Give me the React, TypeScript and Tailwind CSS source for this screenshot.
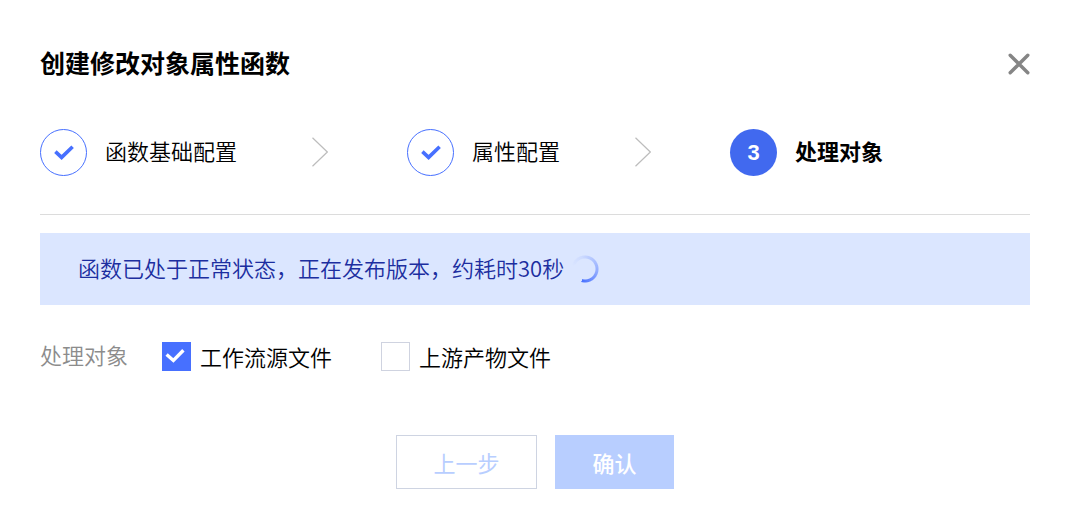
import { FormEvent, useState } from "react";

type Step = {
  title: string;
  status: "done" | "active";
};

const steps: Step[] = [
  { title: "函数基础配置", status: "done" },
  { title: "属性配置", status: "done" },
  { title: "处理对象", status: "active" },
];

const targetOptions = ["工作流源文件", "上游产物文件"];

function StepArrow() {
  return (
    <svg
      viewBox="0 0 16 30"
      fill="none"
      stroke="#bdbdbd"
      strokeWidth="1.2"
      className="mr-[79px] mb-px ml-[75px] h-[30px] w-4 shrink-0"
      aria-hidden="true"
    >
      <path d="M0.5 0.8L15.3 15L0.5 29.2" />
    </svg>
  );
}

function StepBadge({ step, index }: { step: Step; index: number }) {
  if (step.status === "active") {
    return (
      <span className="flex size-[47px] shrink-0 items-center justify-center rounded-full bg-[#4169ef] font-['Liberation_Sans',sans-serif] text-[22px] font-bold text-white">
        {index + 1}
      </span>
    );
  }

  return (
    <span className="flex size-[47px] shrink-0 items-center justify-center rounded-full border border-[#4770ff]">
      <svg
        viewBox="0 0 20 16"
        fill="none"
        stroke="#4770ff"
        strokeWidth="3.6"
        className="h-4 w-5"
        aria-hidden="true"
      >
        <path d="M1.4 6.6L7.6 12.4L18.6 1.8" />
      </svg>
    </span>
  );
}

function Spinner() {
  return (
    <span
      role="status"
      aria-label="发布中"
      className="size-[30px] shrink-0 rounded-full bg-[conic-gradient(from_285deg,#4770ff00_0deg,#4770ff18_60deg,#4770ff80_180deg,#4770ff_270deg,transparent_272deg)] [mask:radial-gradient(circle,transparent_10px,black_11px,black_13px,transparent_14px)]"
    />
  );
}

export default function App() {
  const [selected, setSelected] = useState<string[]>(["工作流源文件"]);

  function toggleOption(option: string) {
    setSelected((current) =>
      current.includes(option)
        ? current.filter((item) => item !== option)
        : [...current, option]
    );
  }

  function handleSubmit(event: FormEvent<HTMLFormElement>) {
    event.preventDefault();
  }

  return (
    <main
      lang="zh-CN"
      className="bg-white pt-11 pr-[39px] pb-8 pl-10 font-['Noto_Sans_CJK_SC',sans-serif] text-[22px] leading-8 font-[350] text-black"
    >
      <header className="flex h-10 items-center justify-between">
        <h1 className="pb-1 text-[25px] font-bold">创建修改对象属性函数</h1>

        <button type="button" aria-label="关闭" className="p-0">
          <svg
            viewBox="0 0 22 22"
            fill="none"
            stroke="#858585"
            strokeWidth="3.4"
            strokeLinecap="round"
            className="size-[22px]"
            aria-hidden="true"
          >
            <path d="M2.2 2.2L19.8 19.8M19.8 2.2L2.2 19.8" />
          </svg>
        </button>
      </header>

      <ol className="mt-[45px] flex items-center border-b border-[#dcdcdc] pb-[38px]">
        {steps.map((step, index) => (
          <li key={step.title} className="flex items-center">
            {index > 0 && <StepArrow />}
            <StepBadge step={step} index={index} />
            <span
              className={
                step.status === "active"
                  ? "ml-[18px] pb-1.5 font-bold whitespace-nowrap"
                  : "ml-[18px] pb-1.5 whitespace-nowrap"
              }
            >
              {step.title}
            </span>
          </li>
        ))}
      </ol>

      <div className="mt-[18px] flex min-h-[72px] items-center gap-1.5 bg-[#dbe6ff] px-[38px] text-[#1c2ea0]">
        <p className="pb-1">函数已处于正常状态，正在发布版本，约耗时30秒</p>
        <Spinner />
      </div>

      <form onSubmit={handleSubmit}>
        <fieldset className="mt-[33px] flex items-center">
          <legend className="float-left mr-[34px] pb-1 text-[#8c8c8c]">处理对象</legend>

          <div className="flex flex-wrap gap-x-[49px]">
            {targetOptions.map((option) => (
              <label key={option} className="flex items-center gap-[9px]">
                <span className="relative flex size-[29px] shrink-0">
                  <input
                    type="checkbox"
                    checked={selected.includes(option)}
                    onChange={() => toggleOption(option)}
                    className="peer size-full appearance-none border border-[#cfd3e0] bg-white checked:border-[#4770ff] checked:bg-[#4770ff]"
                  />
                  <svg
                    viewBox="0 0 29 29"
                    fill="none"
                    stroke="white"
                    strokeWidth="3.4"
                    className="pointer-events-none absolute inset-0 hidden peer-checked:block"
                    aria-hidden="true"
                  >
                    <path d="M4.6 12.4L11.4 18.4L21.4 8.2" />
                  </svg>
                </span>
                {option}
              </label>
            ))}
          </div>
        </fieldset>

        <div className="mt-[61px] flex justify-center gap-[18px]">
          <button
            type="button"
            disabled
            className="h-[54px] w-[141px] border border-[#ced4e2] bg-white font-normal text-[#b8ceff]"
          >
            上一步
          </button>
          <button
            type="submit"
            disabled
            className="h-[54px] w-[119px] bg-[#b8ceff] font-medium text-white"
          >
            确认
          </button>
        </div>
      </form>
    </main>
  );
}
